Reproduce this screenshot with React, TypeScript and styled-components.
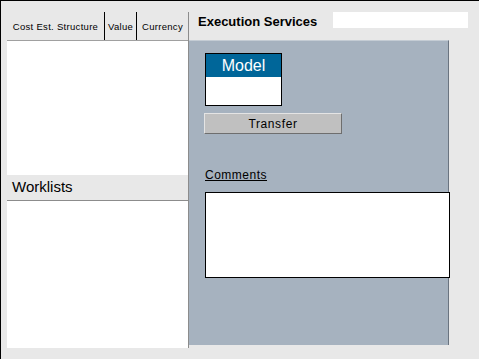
import styled, { createGlobalStyle } from "styled-components";

const GlobalStyle = createGlobalStyle`
  html, body {
    margin: 0;
    padding: 0;
    background: #e8e8e8;
  }
  * {
    box-sizing: border-box;
  }
`;

const Screen = styled.div`
  display: flex;
  width: 479px;
  height: 359px;
  padding: 11px 0 0 6px;
  background: #e8e8e8;
  border-top: 1px solid #000;
  border-left: 1px solid #000;
  font-family: "Liberation Sans", Arial, sans-serif;
  color: #000;
  overflow: hidden;
`;

const LeftPanel = styled.div`
  display: flex;
  flex-direction: column;
  width: 182px;
  height: 336px;
  background: #fff;
  border-right: 1px solid #8c8c8c;
`;

const HeaderRow = styled.div`
  display: flex;
  height: 29px;
  background: #e8e8e8;
  border-bottom: 1px solid #a0a0a0;
`;

const HeaderCell = styled.div<{ $w: number }>`
  width: ${(p) => p.$w}px;
  display: flex;
  align-items: center;
  justify-content: center;
  font-size: 9.5px;
  letter-spacing: 0.3px;
  & + & {
    border-left: 1px solid #000;
  }
`;

const ListBody = styled.div<{ $h?: number }>`
  flex: ${(p) => (p.$h ? `0 0 ${p.$h}px` : "1")};
  background: #fff;
`;

const SectionBar = styled.div`
  height: 26px;
  padding: 3px 0 0 5px;
  background: #e8e8e8;
  border-bottom: 1px solid #8c8c8c;
  font-size: 15px;
`;

const RightColumn = styled.div`
  display: flex;
  flex-direction: column;
  flex: 1;
`;

const TitleRow = styled.div`
  display: flex;
  align-items: flex-start;
  height: 28px;
  padding-left: 9px;
`;

const Title = styled.div`
  width: 135px;
  padding-top: 2px;
  font-size: 13px;
  font-weight: bold;
`;

const SearchBox = styled.div`
  width: 135px;
  height: 16px;
  background: #fff;
`;

const ServicePanel = styled.div`
  display: flex;
  flex-direction: column;
  align-items: flex-start;
  width: 260px;
  height: 305px;
  padding: 12px 0 0 16px;
  background: #a6b2bf;
  border-top: 1px solid #c4ccd4;
  border-right: 1px solid #6a7480;
`;

const ModelBox = styled.div`
  width: 77px;
  height: 53px;
  border: 1px solid #000;
  background: #fff;
`;

const ModelHead = styled.div`
  height: 23px;
  background: #006699;
  color: #fff;
  font-size: 16px;
  text-align: center;
  line-height: 23px;
`;

const TransferButton = styled.button`
  width: 138px;
  height: 21px;
  margin: 7px 0 0 -1px;
  padding: 0;
  background: #c0c0c0;
  border: 1px solid;
  border-color: #e4e4e4 #6e6e6e #6e6e6e #e4e4e4;
  font-family: inherit;
  font-size: 12px;
  letter-spacing: 0.6px;
  color: #000;
`;

const FieldLabel = styled.div`
  margin-top: 34px;
  font-size: 12px;
  letter-spacing: 0.5px;
  text-decoration: underline;
`;

const CommentBox = styled.div`
  width: 245px;
  height: 86px;
  margin-top: 10px;
  background: #fff;
  border: 1px solid #000;
`;

export default function App() {
  return (
    <>
      <GlobalStyle />
      <Screen>
        <LeftPanel>
          <HeaderRow>
            <HeaderCell $w={97}>Cost Est. Structure</HeaderCell>
            <HeaderCell $w={32}>Value</HeaderCell>
            <HeaderCell $w={52}>Currency</HeaderCell>
          </HeaderRow>
          <ListBody $h={134} />
          <SectionBar>Worklists</SectionBar>
          <ListBody />
        </LeftPanel>
        <RightColumn>
          <TitleRow>
            <Title>Execution Services</Title>
            <SearchBox />
          </TitleRow>
          <ServicePanel>
            <ModelBox>
              <ModelHead>Model</ModelHead>
            </ModelBox>
            <TransferButton>Transfer</TransferButton>
            <FieldLabel>Comments</FieldLabel>
            <CommentBox />
          </ServicePanel>
        </RightColumn>
      </Screen>
    </>
  );
}
